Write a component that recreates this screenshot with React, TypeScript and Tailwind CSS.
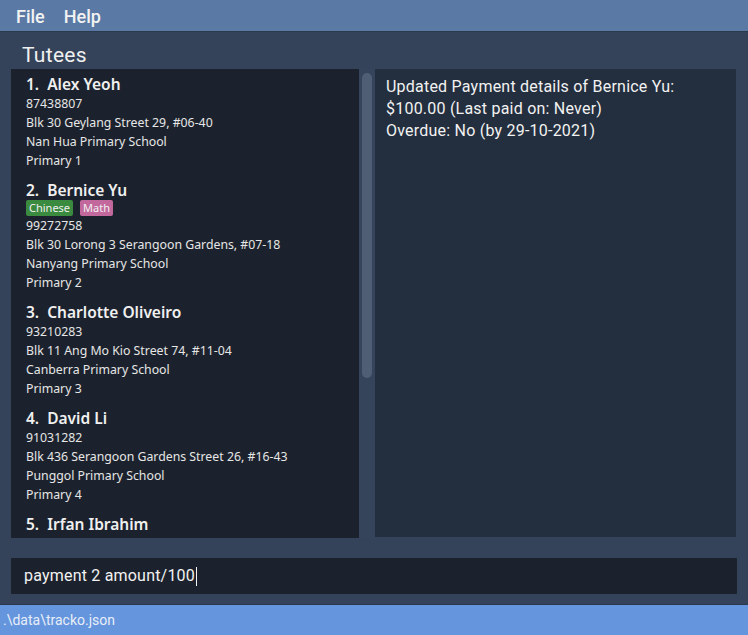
import React from "react";

type Tutee = {
  name: string;
  tags?: { label: string; cls: string }[];
  phone: string;
  address: string;
  school: string;
  level: string;
};

const tutees: Tutee[] = [
  { name: "Alex Yeoh", phone: "87438807", address: "Blk 30 Geylang Street 29, #06-40", school: "Nan Hua Primary School", level: "Primary 1" },
  {
    name: "Bernice Yu",
    tags: [
      { label: "Chinese", cls: "bg-[#3a8a3f]" },
      { label: "Math", cls: "bg-[#c2689c]" },
    ],
    phone: "99272758",
    address: "Blk 30 Lorong 3 Serangoon Gardens, #07-18",
    school: "Nanyang Primary School",
    level: "Primary 2",
  },
  { name: "Charlotte Oliveiro", phone: "93210283", address: "Blk 11 Ang Mo Kio Street 74, #11-04", school: "Canberra Primary School", level: "Primary 3" },
  { name: "David Li", phone: "91031282", address: "Blk 436 Serangoon Gardens Street 26, #16-43", school: "Punggol Primary School", level: "Primary 4" },
  { name: "Irfan Ibrahim", phone: "92492021", address: "Blk 47 Tampines Street 20, #17-35", school: "Tampines Primary School", level: "Primary 5" },
];

function Card({ t, i }: { t: Tutee; i: number }) {
  return (
    <div className="px-[15px] py-[5px]">
      <div className="h-[20px] leading-[20px] text-[15.5px] font-semibold text-[#f0f0f0] whitespace-pre">
        {`${i + 1}.  ${t.name}`}
      </div>
      {t.tags && (
        <div className="flex gap-[7px] h-[16px] items-center">
          {t.tags.map((g) => (
            <span key={g.label} className={`${g.cls} text-[11px] leading-[16px] h-[16px] px-[3px] rounded-[2px] text-[#f0f0f0]`}>
              {g.label}
            </span>
          ))}
        </div>
      )}
      {[t.phone, t.address, t.school, t.level].map((s, k) => (
        <div key={k} className="h-[19px] leading-[19px] text-[12.3px] text-[#e6e6e6]">
          {s}
        </div>
      ))}
    </div>
  );
}

export default function App() {
  return (
    <div className="w-[748px] h-[635px] flex flex-col overflow-hidden bg-[#34435a]" style={{ fontFamily: '"Noto Sans", "Open Sans", sans-serif' }}>
      <div className="h-[32px] shrink-0 bg-[#5a7aa5] flex items-center gap-[19px] pl-[16px] pt-[1px] text-[18px] font-medium text-[#f2f2f2] border-b border-[#2c3a4e]" style={{ fontFamily: "Roboto, sans-serif" }}>
        <span>File</span>
        <span>Help</span>
      </div>
      <div className="flex-1 flex flex-col min-h-0 border-b border-[#2b384b]">
        <div className="h-[37px] shrink-0 flex items-end pl-[22px] pb-[1px] text-[21px] tracking-[0.3px] text-[#f0f0f0] leading-[26px]" style={{ fontFamily: "Roboto, sans-serif" }}>
          Tutees
        </div>
        <div className="flex h-[469px] pl-[11px] pr-[12px]">
          <div className="w-[348px] bg-[#1c222d] overflow-hidden">
            {tutees.map((t, i) => (
              <Card key={i} t={t} i={i} />
            ))}
          </div>
          <div className="w-[16px] bg-[#35445a] pt-[4px] flex justify-center">
            <div className="w-[10px] h-[305px] rounded-[5px] bg-[#4f5e75]" />
          </div>
          <div className="flex-1 bg-[#232e3e] h-[468px] px-[11px] pt-[7px] text-[16px] leading-[22px] tracking-[0.22px] text-[#f2f2f2]" style={{ fontFamily: "Roboto, sans-serif" }}>
            <div>Updated Payment details of Bernice Yu:</div>
            <div>$100.00 (Last paid on: Never)</div>
            <div>Overdue: No (by 29-10-2021)</div>
          </div>
        </div>
        <div className="h-[20px] shrink-0" />
        <div className="mx-[11px] h-[36px] bg-[#1c222d] flex items-center pl-[13px] text-[16px] leading-[20px] tracking-[0.2px] text-[#f2f2f2]" style={{ fontFamily: "Roboto, sans-serif" }}>
          <span>payment 2 amount/100</span>
          <span className="inline-block w-[1px] h-[19px] bg-[#f2f2f2] ml-[1px]" />
        </div>
      </div>
      <div className="h-[30px] shrink-0 bg-[#6495dd] flex items-center pl-[3px] text-[14px] text-[#e8eef8]" style={{ fontFamily: "Roboto, sans-serif" }}>
        .\data\tracko.json
      </div>
    </div>
  );
}
